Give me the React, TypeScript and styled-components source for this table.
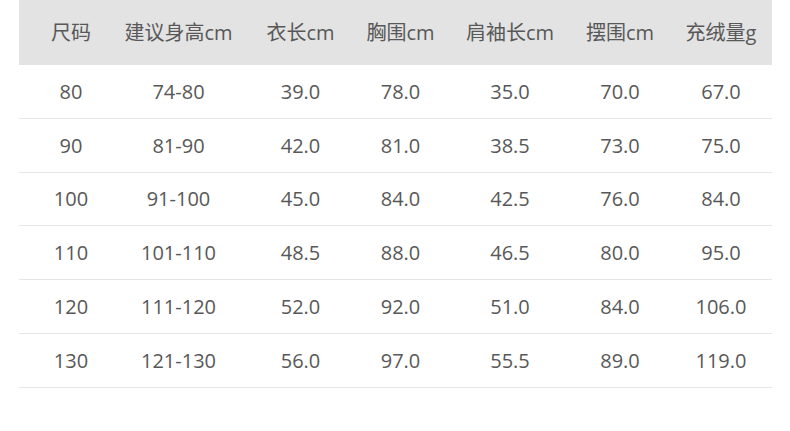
import styled, { createGlobalStyle } from "styled-components";

const GlobalStyle = createGlobalStyle`
  body {
    margin: 0;
    background: #ffffff;
    font-family: "Open Sans", "Noto Sans CJK SC", sans-serif;
  }
`;

const columns = "88px 143px 101px 99px 120px 100px 102px";

const headers = ["尺码", "建议身高cm", "衣长cm", "胸围cm", "肩袖长cm", "摆围cm", "充绒量g"];

const rows = [
  ["80", "74-80", "39.0", "78.0", "35.0", "70.0", "67.0"],
  ["90", "81-90", "42.0", "81.0", "38.5", "73.0", "75.0"],
  ["100", "91-100", "45.0", "84.0", "42.5", "76.0", "84.0"],
  ["110", "101-110", "48.5", "88.0", "46.5", "80.0", "95.0"],
  ["120", "111-120", "52.0", "92.0", "51.0", "84.0", "106.0"],
  ["130", "121-130", "56.0", "97.0", "55.5", "89.0", "119.0"],
];

const Table = styled.div`
  width: 753px;
  margin-left: 19px;
  color: #585858;
`;

const HeadRow = styled.div`
  display: grid;
  grid-template-columns: ${columns};
  height: 65px;
  background: #e3e3e3;
  align-items: center;
`;

const Row = styled.div`
  display: grid;
  grid-template-columns: ${columns};
  height: 53.8px;
  box-sizing: border-box;
  border-bottom: 1px solid #e6e6e6;
  align-items: center;
`;

const Cell = styled.div<{ first?: boolean; head?: boolean }>`
  display: flex;
  justify-content: center;
  white-space: nowrap;
  font-size: 20px;
  padding-left: ${({ first }) => (first ? "16px" : "0")};
  padding-bottom: ${({ head }) => (head ? "2px" : "0")};
`;

const App = () => {
  return (
    <>
      <GlobalStyle />
      <Table>
        <HeadRow>
          {headers.map((h, i) => (
            <Cell key={h} first={i === 0} head>
              {h}
            </Cell>
          ))}
        </HeadRow>
        {rows.map((r) => (
          <Row key={r[0]}>
            {r.map((v, i) => (
              <Cell key={i} first={i === 0}>
                {v}
              </Cell>
            ))}
          </Row>
        ))}
      </Table>
    </>
  );
};

export default App;
